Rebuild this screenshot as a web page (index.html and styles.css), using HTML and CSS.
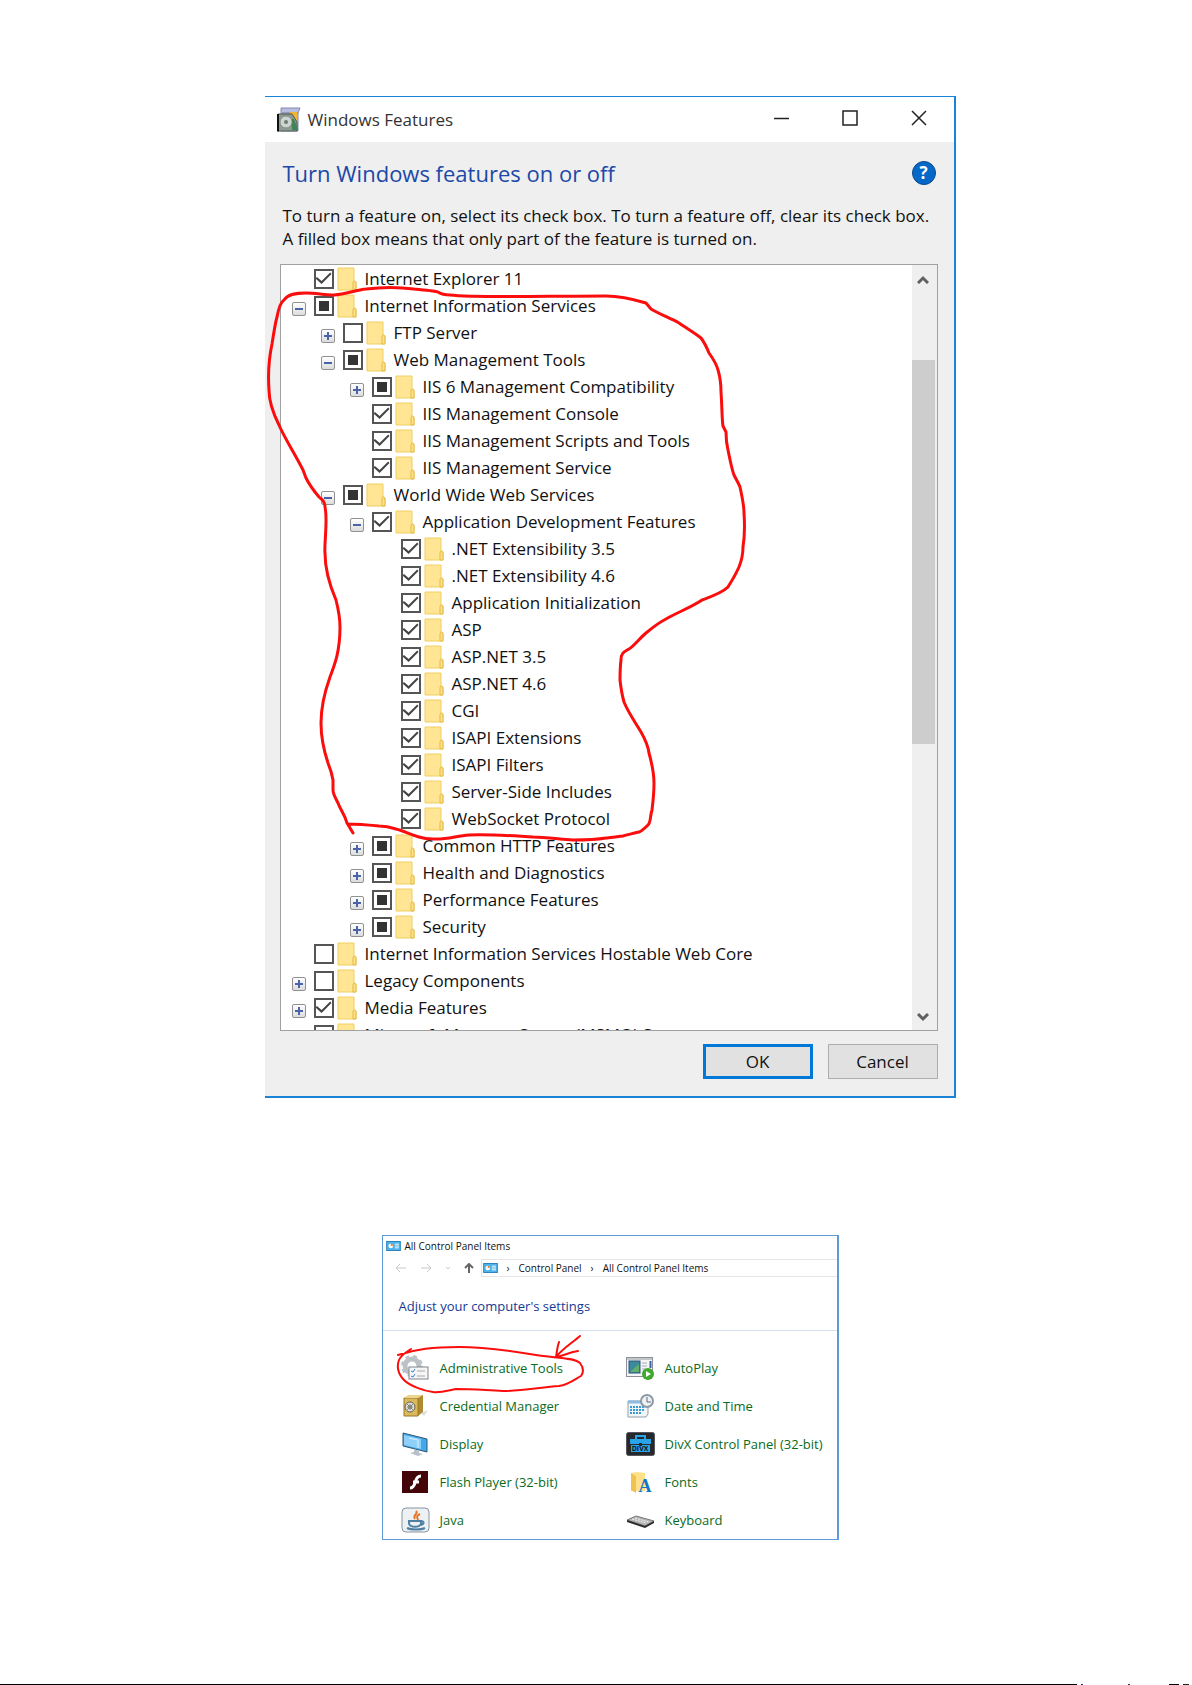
FILE: index.html
```html
<!DOCTYPE html>
<html lang="en">

<head>
    <meta charset="UTF-8">
    <meta name="viewport" content="width=device-width, initial-scale=1.0">
    <title>Windows Features</title>
    <link rel="stylesheet" href="styles.css">
</head>

<body>
    <!-- shared icons -->
    <svg class="sprite" width="0" height="0" aria-hidden="true">
        <symbol id="folder" viewBox="0 0 20 24">
            <path d="M1 1h16v13l2 1v8H1z" fill="#ffe594" stroke="#f0cf60" />
            <path d="M16 23v-7q0-2 1.500-2t1.500 2v7z" fill="#ffe08a" stroke="#e3bb45" />
        </symbol>
        <symbol id="panel" viewBox="0 0 16 11">
            <rect x=".5" y=".5" width="15" height="10" fill="#4db3ea" stroke="#1f7fb8" />
            <circle cx="5" cy="5.500" r="2.600" fill="#fff" />
            <path d="M5 5.500V2.900a2.600 2.600 0 0 1 2.600 2.600z" fill="#f08a24" />
            <path d="M9.500 3.500h4.500M9.500 5.500h4.500M9.500 7.500h4.500" stroke="#fff" />
        </symbol>
    </svg>

    <main class="page">
        <section class="features">
            <header class="title-bar">
                <svg class="title-icon" width="24" height="25" viewBox="0 0 24 25">
                    <path d="M4 1h19l-2 5v18H4z" fill="#b9bddf" stroke="#8488b5" />
                    <path d="M5 6h16" stroke="#7377a5" />
                    <path d="M13 5h7v9h-7z" fill="#f2b632" />
                    <path d="M1 7h14l5 8v9H1z" fill="#8d9b92" stroke="#4f5a53" />
                    <path d="M14 12h3l4 11h-6z" fill="#3d8457" />
                    <circle cx="9" cy="15" r="6" fill="#cfd6d2" stroke="#87918b" />
                    <circle cx="9" cy="15" r="2" fill="#6d7d74" />
                    <path d="M1 7v17.500" stroke="#111" stroke-width="2" />
                </svg>
                <span class="title-text">Windows Features</span>
                <div class="window-buttons">
                    <button type="button" aria-label="Minimize"><svg width="16" height="16" viewBox="0 0 16 16"><path d="M1 8.500h15" /></svg></button>
                    <button type="button" aria-label="Maximize"><svg width="16" height="16" viewBox="0 0 16 16"><path d="M1 1h14v14H1z" /></svg></button>
                    <button type="button" aria-label="Close"><svg width="16" height="16" viewBox="0 0 16 16"><path d="M1 1l14 14M15 1L1 15" /></svg></button>
                </div>
            </header>

            <div class="features-body">
                <div class="heading-row">
                    <h1>Turn Windows features on or off</h1>
                    <button type="button" class="help" aria-label="Help">?</button>
                </div>
                <p class="description">To turn a feature on, select its check box. To turn a feature off, clear its check box.<br>A filled box means that only part of the feature is turned on.</p>

                <div class="list">
                    <ul class="tree">
                        <li>
                            <div class="row"><span class="no-toggle"></span><input type="checkbox" id="f1" checked><svg class="folder"><use href="#folder" /></svg><label for="f1">Internet Explorer 11</label></div>
                        </li>
                        <li>
                            <div class="row"><button type="button" class="toggle" aria-label="Collapse"></button><input type="checkbox" id="f2" class="partial"><svg class="folder"><use href="#folder" /></svg><label for="f2">Internet Information Services</label></div>
                            <ul>
                                <li>
                                    <div class="row"><button type="button" class="toggle closed" aria-label="Expand"></button><input type="checkbox" id="f3"><svg class="folder"><use href="#folder" /></svg><label for="f3">FTP Server</label></div>
                                </li>
                                <li>
                                    <div class="row"><button type="button" class="toggle" aria-label="Collapse"></button><input type="checkbox" id="f4" class="partial"><svg class="folder"><use href="#folder" /></svg><label for="f4">Web Management Tools</label></div>
                                    <ul>
                                        <li>
                                            <div class="row"><button type="button" class="toggle closed" aria-label="Expand"></button><input type="checkbox" id="f5" class="partial"><svg class="folder"><use href="#folder" /></svg><label for="f5">IIS 6 Management Compatibility</label></div>
                                        </li>
                                        <li>
                                            <div class="row"><span class="no-toggle"></span><input type="checkbox" id="f6" checked><svg class="folder"><use href="#folder" /></svg><label for="f6">IIS Management Console</label></div>
                                        </li>
                                        <li>
                                            <div class="row"><span class="no-toggle"></span><input type="checkbox" id="f7" checked><svg class="folder"><use href="#folder" /></svg><label for="f7">IIS Management Scripts and Tools</label></div>
                                        </li>
                                        <li>
                                            <div class="row"><span class="no-toggle"></span><input type="checkbox" id="f8" checked><svg class="folder"><use href="#folder" /></svg><label for="f8">IIS Management Service</label></div>
                                        </li>
                                    </ul>
                                </li>
                                <li>
                                    <div class="row"><button type="button" class="toggle" aria-label="Collapse"></button><input type="checkbox" id="f9" class="partial"><svg class="folder"><use href="#folder" /></svg><label for="f9">World Wide Web Services</label></div>
                                    <ul>
                                        <li>
                                            <div class="row"><button type="button" class="toggle" aria-label="Collapse"></button><input type="checkbox" id="f10" checked><svg class="folder"><use href="#folder" /></svg><label for="f10">Application Development Features</label></div>
                                            <ul>
                                                <li>
                                                    <div class="row"><span class="no-toggle"></span><input type="checkbox" id="f11" checked><svg class="folder"><use href="#folder" /></svg><label for="f11">.NET Extensibility 3.5</label></div>
                                                </li>
                                                <li>
                                                    <div class="row"><span class="no-toggle"></span><input type="checkbox" id="f12" checked><svg class="folder"><use href="#folder" /></svg><label for="f12">.NET Extensibility 4.6</label></div>
                                                </li>
                                                <li>
                                                    <div class="row"><span class="no-toggle"></span><input type="checkbox" id="f13" checked><svg class="folder"><use href="#folder" /></svg><label for="f13">Application Initialization</label></div>
                                                </li>
                                                <li>
                                                    <div class="row"><span class="no-toggle"></span><input type="checkbox" id="f14" checked><svg class="folder"><use href="#folder" /></svg><label for="f14">ASP</label></div>
                                                </li>
                                                <li>
                                                    <div class="row"><span class="no-toggle"></span><input type="checkbox" id="f15" checked><svg class="folder"><use href="#folder" /></svg><label for="f15">ASP.NET 3.5</label></div>
                                                </li>
                                                <li>
                                                    <div class="row"><span class="no-toggle"></span><input type="checkbox" id="f16" checked><svg class="folder"><use href="#folder" /></svg><label for="f16">ASP.NET 4.6</label></div>
                                                </li>
                                                <li>
                                                    <div class="row"><span class="no-toggle"></span><input type="checkbox" id="f17" checked><svg class="folder"><use href="#folder" /></svg><label for="f17">CGI</label></div>
                                                </li>
                                                <li>
                                                    <div class="row"><span class="no-toggle"></span><input type="checkbox" id="f18" checked><svg class="folder"><use href="#folder" /></svg><label for="f18">ISAPI Extensions</label></div>
                                                </li>
                                                <li>
                                                    <div class="row"><span class="no-toggle"></span><input type="checkbox" id="f19" checked><svg class="folder"><use href="#folder" /></svg><label for="f19">ISAPI Filters</label></div>
                                                </li>
                                                <li>
                                                    <div class="row"><span class="no-toggle"></span><input type="checkbox" id="f20" checked><svg class="folder"><use href="#folder" /></svg><label for="f20">Server-Side Includes</label></div>
                                                </li>
                                                <li>
                                                    <div class="row"><span class="no-toggle"></span><input type="checkbox" id="f21" checked><svg class="folder"><use href="#folder" /></svg><label for="f21">WebSocket Protocol</label></div>
                                                </li>
                                            </ul>
                                        </li>
                                        <li>
                                            <div class="row"><button type="button" class="toggle closed" aria-label="Expand"></button><input type="checkbox" id="f22" class="partial"><svg class="folder"><use href="#folder" /></svg><label for="f22">Common HTTP Features</label></div>
                                        </li>
                                        <li>
                                            <div class="row"><button type="button" class="toggle closed" aria-label="Expand"></button><input type="checkbox" id="f23" class="partial"><svg class="folder"><use href="#folder" /></svg><label for="f23">Health and Diagnostics</label></div>
                                        </li>
                                        <li>
                                            <div class="row"><button type="button" class="toggle closed" aria-label="Expand"></button><input type="checkbox" id="f24" class="partial"><svg class="folder"><use href="#folder" /></svg><label for="f24">Performance Features</label></div>
                                        </li>
                                        <li>
                                            <div class="row"><button type="button" class="toggle closed" aria-label="Expand"></button><input type="checkbox" id="f25" class="partial"><svg class="folder"><use href="#folder" /></svg><label for="f25">Security</label></div>
                                        </li>
                                    </ul>
                                </li>
                            </ul>
                        </li>
                        <li>
                            <div class="row"><span class="no-toggle"></span><input type="checkbox" id="f26"><svg class="folder"><use href="#folder" /></svg><label for="f26">Internet Information Services Hostable Web Core</label></div>
                        </li>
                        <li>
                            <div class="row"><button type="button" class="toggle closed" aria-label="Expand"></button><input type="checkbox" id="f27"><svg class="folder"><use href="#folder" /></svg><label for="f27">Legacy Components</label></div>
                        </li>
                        <li>
                            <div class="row"><button type="button" class="toggle closed" aria-label="Expand"></button><input type="checkbox" id="f28" checked><svg class="folder"><use href="#folder" /></svg><label for="f28">Media Features</label></div>
                        </li>
                        <li>
                            <div class="row"><span class="no-toggle"></span><input type="checkbox" id="f29"><svg class="folder"><use href="#folder" /></svg><label for="f29">Microsoft Message Queue (MSMQ) Server</label></div>
                        </li>
                    </ul>
                    <div class="scrollbar">
                        <button type="button" aria-label="Scroll up"><svg width="12" height="9" viewBox="0 0 12 9"><path d="M1 8l5-5 5 5" /></svg></button>
                        <div class="track"><div class="thumb"></div></div>
                        <button type="button" aria-label="Scroll down"><svg width="12" height="9" viewBox="0 0 12 9"><path d="M1 1l5 5 5-5" /></svg></button>
                    </div>
                </div>

                <div class="actions">
                    <button type="button" class="btn btn-default">OK</button>
                    <button type="button" class="btn">Cancel</button>
                </div>
            </div>

            <!-- red pen outline round the IIS branch -->
            <svg class="pen" width="691" height="1001" viewBox="0 0 691 1001" aria-hidden="true">
                <path d="M89 737L83 727C81 719 77 715 74 707C71 701 69 698 69 694L69 684C68 678 66 672 64 667C60 655 57 640 57 627C57 610 61 595 66 581C71 568 76 555 76 531C76 520 74 512 72 504C66 490 61 475 61 457C60 448 64 425 61 411C61 404 57 403 55 401C50 395 45 388 42 382L39 374C31 358 21 343 15 329C8 315 5 303 5 294C4 280 5 262 8 248C10 236 11 228 13 221C15 210 17 206 20 204C24 198 32 197 42 197C52 197 60 199 70 199C82 198 92 194 102 193C118 191 135 191 150 193C160 194 172 195 174 196C177 198 180 199 186 199C210 202 280 200 342 200C355 200 372 204 382 207L387 213C395 218 406 222 415 227C424 233 432 238 437 242C440 246 443 252 445 257C450 264 453 270 454 274C457 284 457 290 457 296C458 310 458 325 459 330L462 336C462 345 463 350 464 354C466 364 468 374 470 379C473 385 475 388 476 391C478 400 480 410 480 417C481 432 480 445 479 451C479 458 477 466 475 471C471 480 467 486 464 491C458 497 446 501 438 504C428 511 412 517 402 523C394 527 388 532 382 537C375 543 370 550 365 553C360 556 357 557 357 564C356 572 356 578 356 584C357 593 358 599 360 606C364 616 371 626 377 636C381 643 384 650 385 657C388 668 390 678 390 687C390 698 389 706 388 714C386 720 387 726 384 729C380 733 378 735 375 736C367 738 362 739 359 740C350 741 345 742 342 742C330 744 318 744 309 744C295 743 280 741 269 741C250 740 225 738 205 739C192 740 182 744 169 743C162 743 158 742 155 741C145 738 140 735 132 733C126 731 120 730 115 730C105 729 95 728 84 728" />
            </svg>
        </section>

        <section class="control-panel">
            <header class="cp-title">
                <svg width="15" height="10"><use href="#panel" /></svg>
                <span>All Control Panel Items</span>
            </header>
            <nav class="cp-nav">
                <div class="cp-arrows">
                    <svg width="12" height="10" viewBox="0 0 12 10"><path d="M11 5H1M5 1L1 5l4 4" stroke="#c9c9c9" /></svg>
                    <svg width="12" height="10" viewBox="0 0 12 10"><path d="M1 5h10M7 1l4 4-4 4" stroke="#c9c9c9" /></svg>
                    <svg width="6" height="10" viewBox="0 0 6 10"><path d="M1 4l2 2 2-2" stroke="#c9c9c9" /></svg>
                    <svg width="10" height="10" viewBox="0 0 10 10"><path d="M5 10V1M1 5l4-4 4 4" stroke="#666" stroke-width="2" /></svg>
                </div>
                <div class="cp-address">
                    <svg width="15" height="10"><use href="#panel" /></svg>
                    <span class="crumb-sep">›</span>
                    <a href="#">Control Panel</a>
                    <span class="crumb-sep">›</span>
                    <a href="#">All Control Panel Items</a>
                </div>
            </nav>
            <h2>Adjust your computer's settings</h2>
            <div class="cp-items">
                <a href="#">
                    <svg width="29" height="26" viewBox="0 0 29 26">
                        <circle cx="11" cy="11" r="7" fill="none" stroke="#bcc1c7" stroke-width="5" />
                        <circle cx="11" cy="11" r="10" fill="none" stroke="#bcc1c7" stroke-width="2" stroke-dasharray="4 4" />
                        <rect x="8" y="12" width="19" height="12" fill="#f6f6f6" stroke="#7f858c" />
                        <path d="M10 16l2 1 2-3M10 21l2 1 2-3" fill="none" stroke="#2f83d0" />
                        <path d="M16 16h8M16 21h8" stroke="#a8a8a8" />
                    </svg>
                    Administrative Tools
                </a>
                <a href="#">
                    <svg width="29" height="26" viewBox="0 0 29 26">
                        <rect x=".5" y="2.500" width="26" height="19" fill="#f4f5f6" stroke="#8b9197" />
                        <path d="M1 4h25" stroke="#c3c7cb" stroke-width="2" />
                        <rect x="3" y="6" width="11" height="12" fill="#3b8b9c" stroke="#31507a" />
                        <path d="M4 17l9-8v8z" fill="#62ae6d" />
                        <path d="M16 8h5M16 11h5M16 14h4" stroke="#aaa" />
                        <path d="M24.500 6v7" stroke="#3565a5" stroke-width="2" />
                        <circle cx="22" cy="19" r="6" fill="#3eaa2c" />
                        <path d="M20 16l5 3-5 3z" fill="#fff" />
                    </svg>
                    AutoPlay
                </a>
                <a href="#">
                    <svg width="29" height="26" viewBox="0 0 29 26">
                        <path d="M20 20l7-3-4 6z" fill="#ddd" />
                        <path d="M3 5l5-3h14v17l-5 4H3z" fill="#b08a2e" />
                        <path d="M3 5h14v18H3z" fill="#d9b95c" stroke="#9a7823" />
                        <path d="M3 5l5-3h14l-5 3z" fill="#ecd68d" />
                        <circle cx="9" cy="14" r="5" fill="#ddd" stroke="#66634f" stroke-width="1" />
                        <circle cx="9" cy="14" r="2" fill="none" stroke="#66634f" />
                        <path d="M5 10l8 8M13 10l-8 8" stroke="#8b887a" />
                    </svg>
                    Credential Manager
                </a>
                <a href="#">
                    <svg width="29" height="26" viewBox="0 0 29 26">
                        <path d="M2 8h20v13l-2 3H2z" fill="#f2f6f9" stroke="#93a0aa" />
                        <path d="M2 9h20" stroke="#8fbbe0" stroke-width="3" />
                        <path d="M4 14h15M4 17h15M4 20h11" stroke="#3b9bd2" stroke-width="2" stroke-dasharray="2 1" />
                        <circle cx="21" cy="8" r="6" fill="#eef2f5" stroke="#8c9aa5" stroke-width="2" />
                        <path d="M21 4v5h4" fill="none" stroke="#667" />
                    </svg>
                    Date and Time
                </a>
                <a href="#">
                    <svg width="29" height="26" viewBox="0 0 29 26">
                        <path d="M2 2l24 6v13L2 15z" fill="#3fa9ee" stroke="#35566f" />
                        <path d="M3 4l17 4v10L3 14z" fill="#8ed0fa" />
                        <path d="M8 7l9 2v8" fill="none" stroke="#d8f0ff" />
                        <path d="M13 18l5 2v2l4 1-5 2-8-3 4-1z" fill="#b6c1c9" />
                    </svg>
                    Display
                </a>
                <a href="#">
                    <svg width="29" height="26" viewBox="0 0 29 26">
                        <rect x=".5" y="1.500" width="28" height="23" rx="2" fill="#27282c" stroke="#55575c" />
                        <path d="M10 8V5h9v3" fill="none" stroke="#29a4e8" stroke-width="2" />
                        <path d="M4 8h21v5H4zM5 14h19v7H5z" fill="#29a4e8" />
                        <path d="M13 12h3v3h-3z" fill="#27282c" />
                        <text x="14" y="20" class="divx">DIVX</text>
                    </svg>
                    DivX Control Panel (32-bit)
                </a>
                <a href="#">
                    <svg width="29" height="26" viewBox="0 0 29 26">
                        <rect x="1" y="2" width="26" height="22" fill="#430507" />
                        <path d="M20 7c-5 0-5 5-6 7-1 3-2 5-5 5M12 13h6" fill="none" stroke="#fff" stroke-width="3" />
                    </svg>
                    Flash Player (32-bit)
                </a>
                <a href="#">
                    <svg width="29" height="26" viewBox="0 0 29 26">
                        <path d="M5 4l6-1 8 1v18H5z" fill="#ffe18a" />
                        <path d="M5 4l5 3v17l-5-3z" fill="#f0c252" />
                        <text x="19" y="23" class="letter">A</text>
                    </svg>
                    Fonts
                </a>
                <a href="#">
                    <svg width="29" height="26" viewBox="0 0 29 26">
                        <rect x="1" y="1" width="27" height="24" rx="4" fill="#edf1f4" stroke="#8793a0" />
                        <path d="M15 4c3 3-4 4-1 8M19 7c-4 2-3 3-2 6" fill="none" stroke="#e8762c" stroke-width="2" />
                        <path d="M8 14h12v2c0 5-12 5-12 0zM20 14c4 0 3 4-1 4M6 21c4 2 14 2 18 0" fill="none" stroke="#4e80a3" stroke-width="2" />
                    </svg>
                    Java
                </a>
                <a href="#">
                    <svg width="29" height="26" viewBox="0 0 29 26">
                        <path d="M1 13l9-4 18 5-9 5z" fill="#b3b3b3" stroke="#777" />
                        <path d="M1 13v2l18 6 9-5v-2l-9 5z" fill="#2b2b2b" />
                        <path d="M6 12l14 4M9 11l14 4" stroke="#f6f6f6" stroke-dasharray="2 1" />
                    </svg>
                    Keyboard
                </a>
            </div>

            <!-- red pen ring and arrow on Administrative Tools -->
            <svg class="pen pen-thin" width="457" height="307" viewBox="0 0 457 307" aria-hidden="true">
                <path d="M16 120C35 114 50 112 77 112C102 112 130 116 154 120C170 123 192 122 198 128C201 132 202 137 199 141C192 145 186 150 177 151C160 152 140 156 121 156C100 155 90 154 74 154C64 156 58 158 51 157C42 156 28 151 22 145C15 138 15 130 17 125C19 120 24 117 29 114" />
                <path d="M198 101C190 108 180 114 174 122M177 107C175 112 175 117 174 122C181 121 188 117 196 116" />
            </svg>
        </section>
    </main>

    <footer class="page-end">
        <span class="rule"></span>
        <span class="dots"></span>
    </footer>
</body>

</html>
```
FILE: styles.css
```css
* {
    box-sizing: border-box;
}

body {
    margin: 0;
    min-height: 100vh;
    display: flex;
    flex-direction: column;
    background: #fff;
    color: #111;
    font-family: "Open Sans", "Noto Sans", sans-serif;
}

button {
    font-family: inherit;
    color: inherit;
    padding: 0;
}

ul {
    list-style: none;
    margin: 0;
    padding: 0;
}

a {
    color: inherit;
    text-decoration: none;
}

.sprite {
    position: absolute;
}

.page {
    flex: 1;
    display: flex;
    flex-direction: column;
    align-items: center;
    gap: 137px;
    padding: 96px 0 0 28px;
}

/* Windows Features dialog */
.features {
    position: relative;
    width: 100%;
    max-width: 691px;
    background: #efefef;
    border: 1px solid #1883d7;
    border-left: 0;
    border-right-width: 2px;
    border-bottom-width: 2px;
}

.title-bar {
    display: flex;
    align-items: center;
    height: 45px;
    padding-left: 12px;
    background: #fff;
}

.title-text {
    margin-left: 7px;
    font-size: 17px;
    color: #333;
}

.window-buttons {
    display: flex;
    margin-left: auto;
}

.window-buttons button {
    width: 69px;
    height: 40px;
    border: 0;
    background: none;
}

.window-buttons svg {
    fill: none;
    stroke: #222;
    stroke-width: 1.5;
}

.features-body {
    padding: 17px 16px 17px 15px;
}

.heading-row {
    display: flex;
    align-items: center;
    justify-content: space-between;
    height: 28px;
    padding: 0 2px 0 3px;
}

.heading-row h1 {
    margin: 0;
    font-size: 22px;
    font-weight: normal;
    color: #1c48a8;
}

.help {
    width: 24px;
    height: 24px;
    border: 1px solid #0a4a86;
    border-radius: 50%;
    background: #0468c8;
    color: #fff;
    font-size: 17px;
    font-weight: bold;
    line-height: 20px;
}

.description {
    margin: 17px 0 14px 3px;
    font-size: 17px;
    line-height: 23px;
    white-space: nowrap;
}

.list {
    display: flex;
    height: 767px;
    border: 1px solid #a0a0a0;
    background: #fff;
    overflow: hidden;
}

.tree {
    flex: 1;
    padding-left: 11px;
}

.tree ul {
    padding-left: 29px;
}

.row {
    display: flex;
    align-items: center;
    height: 27px;
}

.row label {
    margin-left: 8px;
    font-size: 17px;
    line-height: 27px;
    white-space: nowrap;
}

.toggle,
.no-toggle {
    flex: none;
    width: 14px;
    height: 14px;
    margin: 6px 8px 0 0;
}

.toggle {
    position: relative;
    border: 1px solid #919191;
    border-radius: 2px;
    background: linear-gradient(#fff, #dcdcdc);
}

.toggle::before,
.toggle.closed::after {
    content: "";
    position: absolute;
    top: 5px;
    left: 2px;
    width: 8px;
    height: 2px;
    background: #4b63a7;
}

.toggle.closed::after {
    transform: rotate(90deg);
}

.row input {
    appearance: none;
    flex: none;
    display: grid;
    place-items: center;
    width: 20px;
    height: 20px;
    margin: 0;
    border: 2px solid #555;
    background: #fff;
}

.row input:checked::before {
    content: "";
    width: 16px;
    height: 14px;
    background: #444;
    clip-path: polygon(0 50%, 9% 39%, 38% 68%, 92% 7%, 100% 17%, 38% 89%);
}

.row input.partial::before {
    content: "";
    width: 10px;
    height: 10px;
    background: #333;
}

.folder {
    flex: none;
    width: 20px;
    height: 24px;
    margin-left: 3px;
}

.scrollbar {
    display: flex;
    flex-direction: column;
    width: 25px;
    padding-right: 2px;
    background: #efefef;
}

.scrollbar button {
    height: 27px;
    border: 0;
    background: none;
}

.scrollbar svg {
    fill: none;
    stroke: #606060;
    stroke-width: 3;
}

.track {
    flex: 1;
    padding-top: 68px;
}

.thumb {
    height: 384px;
    background: #cdcdcd;
}

.actions {
    display: flex;
    justify-content: flex-end;
    gap: 15px;
    margin-top: 13px;
}

.btn {
    width: 110px;
    height: 35px;
    border: 1px solid #adadad;
    background: #e1e1e1;
    font-size: 17px;
}

.btn-default {
    border: 3px solid #0078d7;
}

/* pen marks drawn over a window */
.pen {
    position: absolute;
    top: -1px;
    left: -1px;
    fill: none;
    stroke: #fb0d0d;
    stroke-width: 3;
    stroke-linecap: round;
    stroke-linejoin: round;
    pointer-events: none;
}

.pen-thin {
    stroke-width: 2;
}

/* Control Panel window */
.control-panel {
    position: relative;
    width: 100%;
    max-width: 457px;
    border: 1px solid #5b9bd5;
    border-right-width: 2px;
    font-size: 13px;
}

.cp-title {
    display: flex;
    align-items: center;
    gap: 4px;
    height: 20px;
    padding-left: 3px;
    font-size: 10px;
}

.cp-nav {
    display: flex;
    height: 24px;
    padding: 3px 0;
}

.cp-arrows {
    display: flex;
    align-items: center;
    gap: 13px;
    width: 98px;
    padding-left: 12px;
}

.cp-arrows svg {
    fill: none;
}

.cp-address {
    flex: 1;
    display: flex;
    align-items: center;
    gap: 9px;
    padding-left: 1px;
    border: 1px solid #e3e6e8;
    border-right: 0;
    font-size: 10px;
}

.control-panel h2 {
    margin: 0 0 18px;
    padding: 14px 0 12px 16px;
    border-bottom: 1px solid #d5e0ee;
    font-size: 13px;
    font-weight: normal;
    line-height: 24px;
    color: #133a94;
}

.cp-items {
    display: grid;
    grid-template-columns: 225px 1fr;
    grid-auto-rows: 38px;
    padding-left: 18px;
    color: #0a6b1c;
}

.cp-items a {
    display: flex;
    align-items: center;
    gap: 10px;
    white-space: nowrap;
}

.divx {
    font-size: 7px;
    font-weight: bold;
    text-anchor: middle;
    fill: #111;
}

.letter {
    font-family: "Liberation Serif", serif;
    font-size: 18px;
    font-weight: bold;
    text-anchor: middle;
    fill: #1874c4;
}

/* black rule along the foot of the page */
.page-end {
    display: flex;
    height: 1px;
}

.rule {
    width: 1077px;
    background: #000;
}

.dots {
    flex: 1;
    background: linear-gradient(90deg, #fff 4px, #329 4px 6px, #fff 6px 51px, #333 51px 53px, #fff 53px 92px, #000 92px 102px, #fff 102px 106px, #222 106px 112px, #fff 112px);
}
```
